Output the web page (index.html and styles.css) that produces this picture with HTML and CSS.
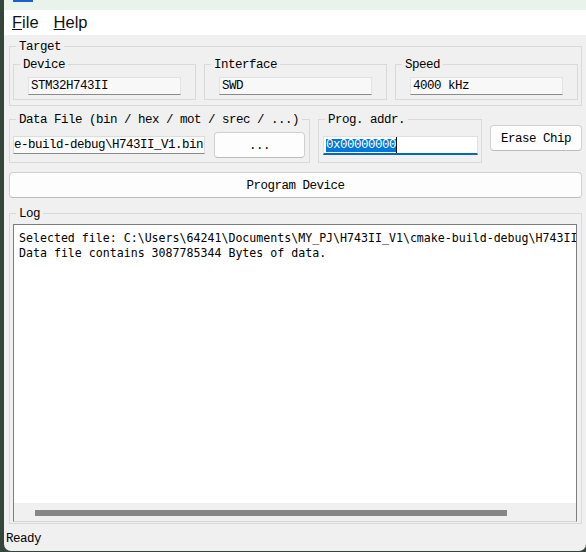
FILE: index.html
```html
<!DOCTYPE html>
<html lang="en">
<head>
    <meta charset="UTF-8">
    <meta name="viewport" content="width=device-width, initial-scale=1.0">
    <title>STM32 Programmer</title>
    <link rel="stylesheet" href="styles.css">
</head>
<body>
    <div class="window">
        <div class="titlebar"><span class="app-icon"></span></div>

        <div class="menubar">
            <span class="menu"><u>F</u>ile</span>
            <span class="menu"><u>H</u>elp</span>
        </div>

        <main class="content">
            <fieldset class="group target">
                <legend>Target</legend>
                <div class="target-row">
                    <fieldset class="group">
                        <legend>Device</legend>
                        <div class="sub-body"><div class="ro-entry">STM32H743II</div></div>
                    </fieldset>
                    <fieldset class="group">
                        <legend>Interface</legend>
                        <div class="sub-body"><div class="ro-entry">SWD</div></div>
                    </fieldset>
                    <fieldset class="group">
                        <legend>Speed</legend>
                        <div class="sub-body"><div class="ro-entry">4000 kHz</div></div>
                    </fieldset>
                </div>
            </fieldset>

            <div class="file-row">
                <fieldset class="group data-file">
                    <legend>Data File (bin / hex / mot / srec / ...)</legend>
                    <div class="entry-row">
                        <div class="path-entry"><span>C:\Users\64241\Documents\MY_PJ\H743II_V1\cmake-build-debug\H743II_V1.bin</span></div>
                        <button class="btn browse">...</button>
                    </div>
                </fieldset>

                <fieldset class="group prog-addr">
                    <legend>Prog. addr.</legend>
                    <div class="addr-body">
                        <div class="addr-entry"><span class="sel">0x00000000</span><span class="caret"></span></div>
                    </div>
                </fieldset>

                <button class="btn erase">Erase Chip</button>
            </div>

            <button class="btn program">Program Device</button>

            <fieldset class="group log">
                <legend>Log</legend>
                <div class="log-box">
                    <div class="log-text">Selected file: C:\Users\64241\Documents\MY_PJ\H743II_V1\cmake-build-debug\H743II_V1.bin
Data file contains 3087785344 Bytes of data.</div>
                    <div class="hscroll"><div class="thumb"></div></div>
                </div>
            </fieldset>
        </main>

        <div class="status">Ready</div>
    </div>
</body>
</html>
```
FILE: styles.css
```css
body {
    margin: 0;
    width: 586px;
    height: 552px;
    overflow: hidden;
    background: #34463a;
    font-family: 'Liberation Mono', 'DejaVu Sans Mono', monospace;
    font-size: 12.5px;
    letter-spacing: -0.5px;
    color: #000;
}

.window {
    margin-left: 4px;
    width: 582px;
    height: 551px;
    background: #f0f0f0;
    border-radius: 0 0 7px 7px;
    overflow: hidden;
    display: flex;
    flex-direction: column;
}

.titlebar {
    height: 10px;
    background: #e9f3eb;
}

.app-icon {
    display: block;
    margin-left: 9px;
    width: 20px;
    height: 2px;
    background: #1b5fcf;
}

.menubar {
    height: 25px;
    background: #fff;
    display: flex;
    gap: 15px;
    padding-left: 8px;
    font-family: 'Liberation Sans', Arial, sans-serif;
    font-size: 16.5px;
    letter-spacing: 0;
    line-height: 25px;
    color: #111;
}

.content {
    padding: 3px 4px 0 5px;
}

/* group boxes */
.group {
    margin: 0;
    padding: 0;
    min-width: 0;
    border: 1px solid #d9d9d9;
}

.group legend {
    margin-left: 6px;
    padding: 2px 3px 0;
    line-height: 14px;
}

.target-row {
    display: grid;
    grid-template-columns: repeat(3, 1fr);
    gap: 8px;
    padding: 2px 3px 5px;
}

.sub-body {
    padding: 5px 14px 4px;
}

.ro-entry {
    box-sizing: border-box;
    height: 18px;
    padding: 0 2px;
    line-height: 17px;
    background: #f8f8f8;
    border: 1px solid #e2e2e2;
    border-bottom-color: #8a8a8a;
    white-space: nowrap;
    overflow: hidden;
}

.file-row {
    display: flex;
    gap: 8px;
    margin-top: 5px;
    align-items: stretch;
}

.data-file {
    width: 301px;
    box-sizing: border-box;
}

.entry-row {
    display: flex;
    align-items: center;
    gap: 9px;
    padding: 5px 4px 4px 3px;
}

.path-entry {
    box-sizing: border-box;
    width: 192px;
    height: 18px;
    display: flex;
    justify-content: flex-end;
    overflow: hidden;
    padding-right: 1px;
    line-height: 17px;
    background: #fbfbfb;
    border: 1px solid #dcdcdc;
    border-bottom-color: #8a8a8a;
}

.path-entry span {
    flex-shrink: 0;
    white-space: nowrap;
}

.btn {
    box-sizing: border-box;
    height: 26px;
    padding: 1px 0 0;
    font-family: inherit;
    font-size: 12.5px;
    letter-spacing: -0.5px;
    color: #000;
    background: #fdfdfd;
    border: 1px solid #d0d0d0;
    border-bottom-color: #bcbcbc;
    border-radius: 4px;
}

.browse {
    flex: 1;
}

.prog-addr {
    width: 164px;
    box-sizing: border-box;
}

.addr-body {
    padding: 9px 3px 7px 4px;
}

.addr-entry {
    box-sizing: border-box;
    height: 19px;
    display: flex;
    align-items: center;
    padding-left: 2px;
    background: #fff;
    border: 1px solid #e0e0e0;
    border-bottom: 2px solid #0067c0;
}

.addr-entry .sel {
    background: #0078d7;
    color: #fff;
    line-height: 13px;
}

.addr-entry .caret {
    width: 1px;
    height: 16px;
    background: #000;
}

.erase {
    width: 92px;
    align-self: flex-start;
    margin-top: 14px;
}

.program {
    display: block;
    width: 100%;
    margin-top: 9px;
}

.log {
    margin-top: 7px;
}

.log-box {
    box-sizing: border-box;
    height: 298px;
    margin: 3px 4px 1px 3px;
    display: flex;
    flex-direction: column;
    border: 1px solid #7d7d7d;
    border-bottom-color: #d6d6d6;
}

.log-text {
    flex: 1;
    padding: 6px 5px 0;
    background: #fff;
    font-family: 'DejaVu Sans Mono', monospace;
    font-size: 11.6px;
    letter-spacing: 0;
    line-height: 15px;
    white-space: pre;
    overflow: hidden;
}

.hscroll {
    box-sizing: border-box;
    height: 18px;
    padding: 7px 0 0 21px;
    background: #f0f0f0;
}

.thumb {
    width: 472px;
    height: 6px;
    background: #868686;
}

.status {
    height: 27px;
    box-sizing: border-box;
    padding: 8px 0 0 2px;
    line-height: 14px;
}
```
